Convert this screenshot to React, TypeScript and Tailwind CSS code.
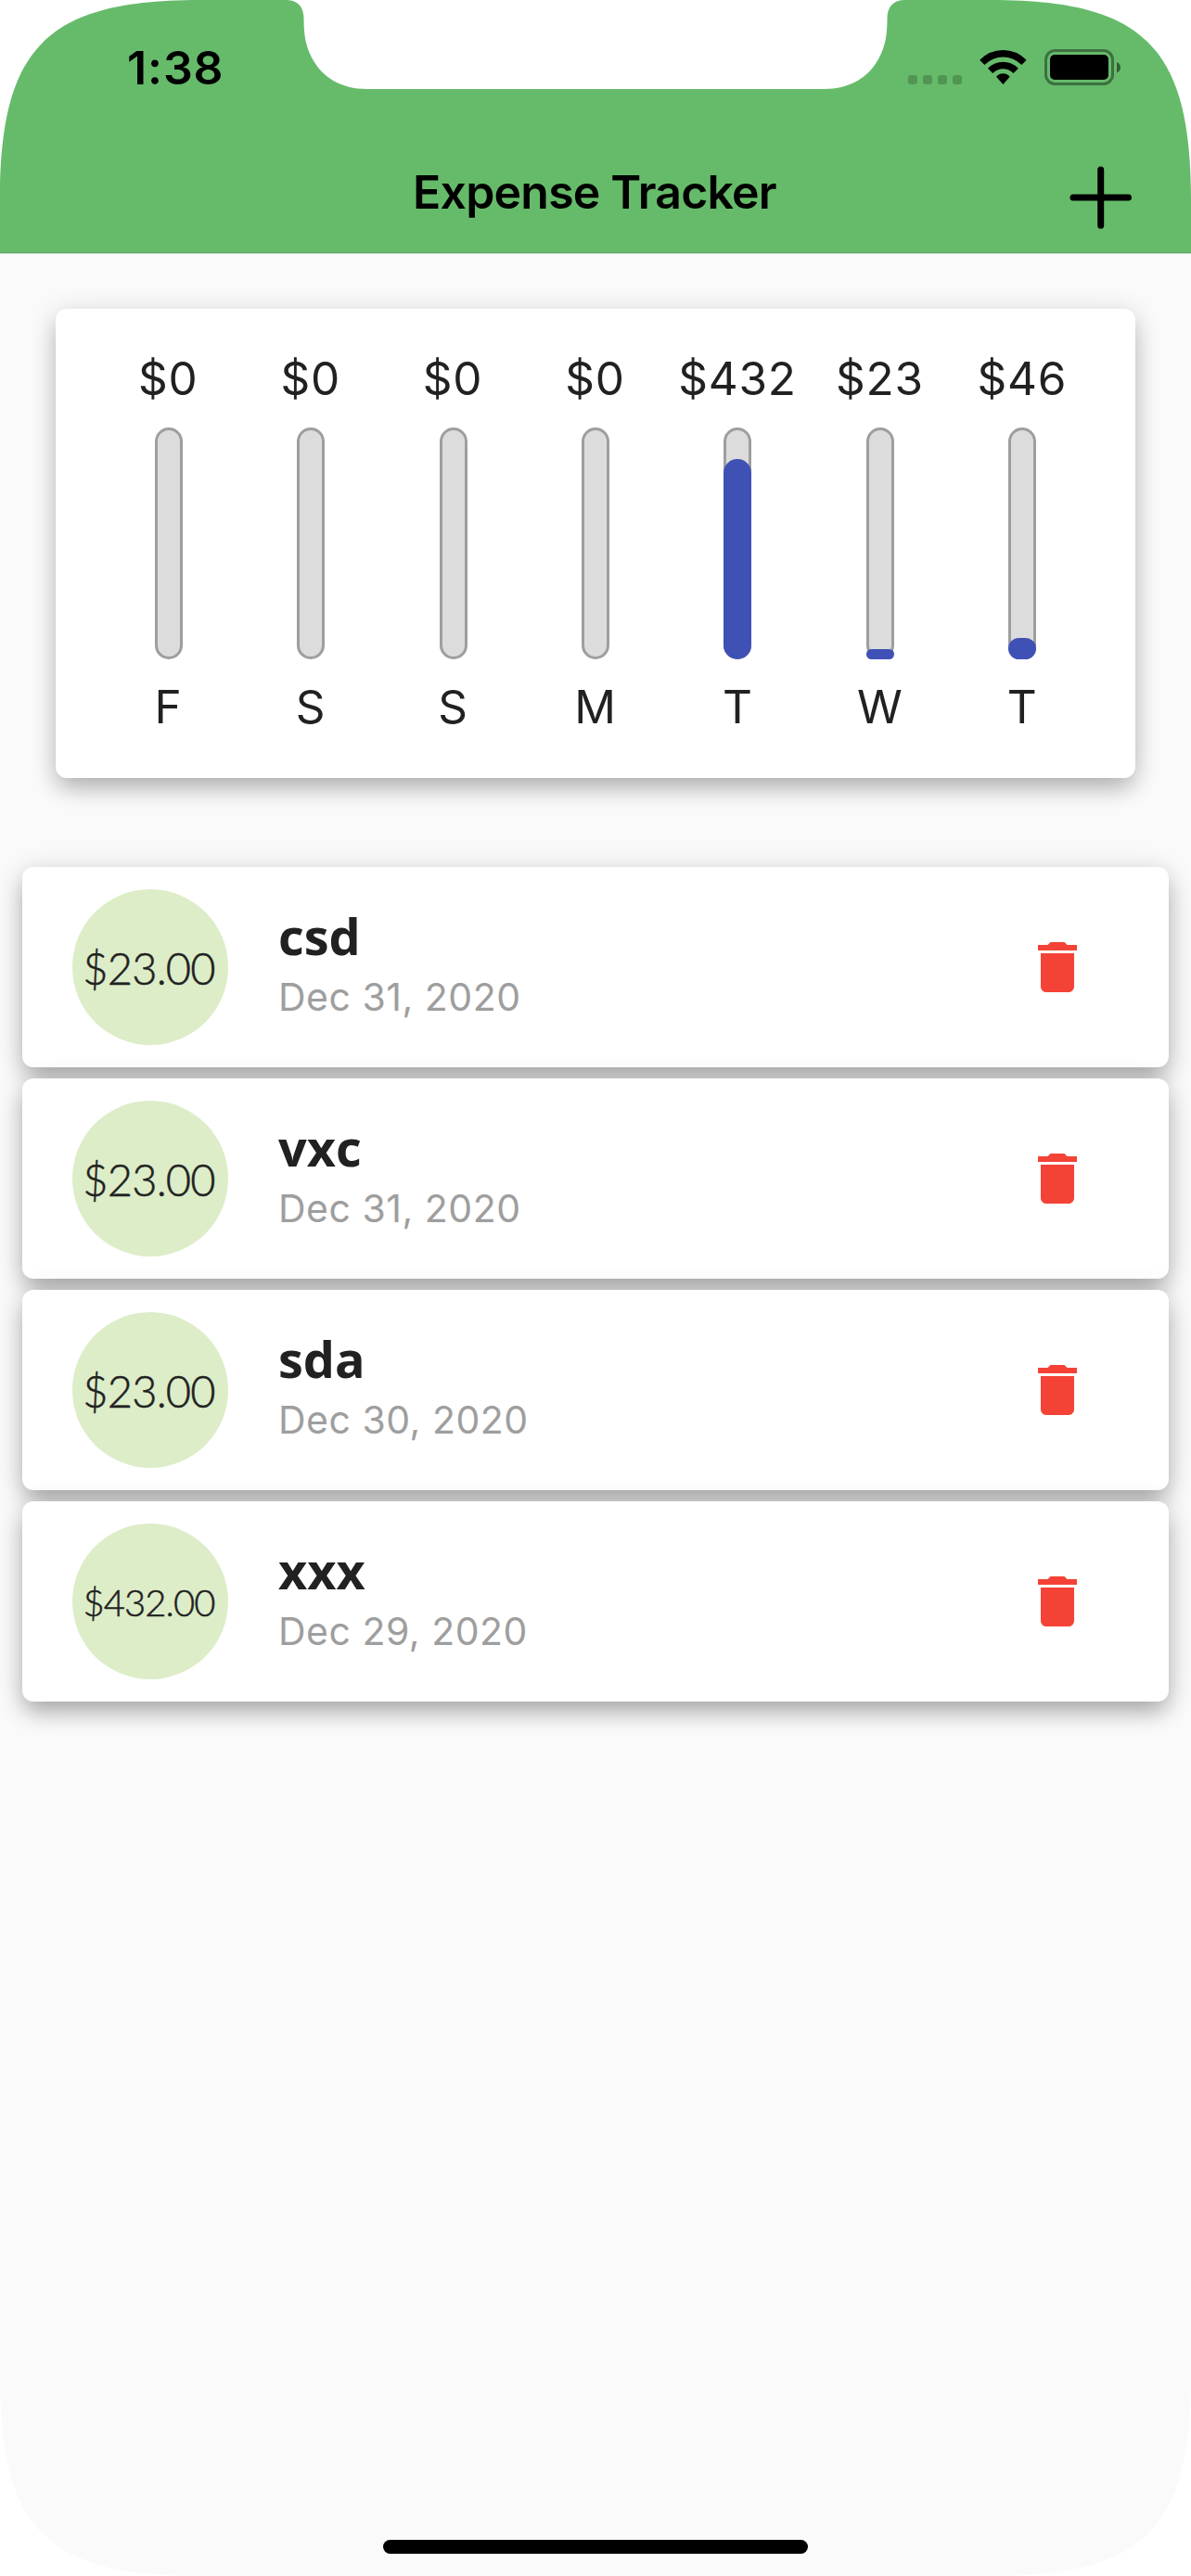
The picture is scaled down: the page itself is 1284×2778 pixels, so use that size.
import React from "react";

const total = 501;

const days = [
  { label: "F", amount: 0 },
  { label: "S", amount: 0 },
  { label: "S", amount: 0 },
  { label: "M", amount: 0 },
  { label: "T", amount: 432 },
  { label: "W", amount: 23 },
  { label: "T", amount: 46 },
];

const transactions = [
  { title: "csd", amount: "$23.00", date: "Dec 31, 2020", small: false },
  { title: "vxc", amount: "$23.00", date: "Dec 31, 2020", small: false },
  { title: "sda", amount: "$23.00", date: "Dec 30, 2020", small: false },
  { title: "xxx", amount: "$432.00", date: "Dec 29, 2020", small: true },
];

function Corner({ className }: { className: string }) {
  return (
    <svg className={`pointer-events-none absolute h-[220px] w-[220px] ${className}`} viewBox="0 0 220 220" fill="#fff">
      <path d="M0 0V215C0 122 17 75 46 46C75 17 122 0 215 0Z" />
    </svg>
  );
}

function Notch() {
  return (
    <svg className="pointer-events-none absolute top-0 left-[300px] h-[97px] w-[684px]" viewBox="300 0 684 97" fill="#fff">
      <path d="M308 0C321 0 327.5 7 327.5 20C327.5 38 329.5 49 336 62C347 83 367 96 396 96H888C917 96 937 83 948 62C954.5 49 956.5 38 956.5 20C956.5 7 963 0 976 0Z" />
    </svg>
  );
}

function StatusBar() {
  return (
    <div className="flex h-[144px] items-start justify-between pt-[40px] pr-[75px] pl-[137px]">
      <div className="text-[50px] leading-[66px] font-semibold tracking-[0.9px]">1:38</div>
      <div className="flex pt-[12px]">
        <div className="mt-[29px] mr-[18px] flex gap-[6px]">
          {[0, 1, 2, 3].map((i) => (
            <div key={i} className="size-[10px] rounded-[3px] bg-black/20" />
          ))}
        </div>
        <svg className="mt-[1px] mr-[17px] h-[40px] w-[53px]" viewBox="1055 53 53 40" fill="none" stroke="#000" strokeWidth="7.4">
          <path d="M1058.8 67.4C1071.500 54.6 1091.300 54.6 1104 67.4" />
          <path d="M1067.600 76.400C1075.400 68.600 1087.400 68.600 1095.200 76.400" />
          <path d="M1074 82.800C1078 78.200 1084.800 78.200 1088.800 82.800L1081.400 91Z" fill="#000" stroke="none" />
        </svg>
        <svg className="h-[42px] w-[84px]" viewBox="1125 52 84 42">
          <rect x="1127.500" y="54.500" width="72" height="36" rx="10" fill="none" stroke="#000" strokeOpacity=".4" strokeWidth="3" />
          <rect x="1132" y="59" width="63" height="27" rx="5" />
          <path d="M1204 67C1209.300 69 1209.300 76.500 1204 78.500Z" fillOpacity=".5" />
        </svg>
      </div>
    </div>
  );
}

function Header() {
  return (
    <header className="h-[274px] shrink-0 border-b border-[#d0dcd0] bg-[#66bb6a] text-black">
      <div className="h-[273px] border-b border-[#5ba75f]">
        <StatusBar />
        <div className="grid h-[127px] grid-cols-[1fr_auto_1fr] items-start">
          <h1 className="col-start-2 pt-[31px] pr-[2px] text-[50px] leading-[64px] font-semibold tracking-[-0.8px]">Expense Tracker</h1>
          <button className="mt-[33px] mr-[61px] justify-self-end" aria-label="Add expense">
            <svg className="h-[72px] w-[72px]" viewBox="0 0 72 72" stroke="#000" strokeWidth="7" strokeLinecap="round">
              <path d="M6 36H65.500M35.700 6V66.300" />
            </svg>
          </button>
        </div>
      </div>
    </header>
  );
}

function Chart() {
  return (
    <section className="mx-[60px] mt-[59px] grid h-[506px] shrink-0 grid-cols-7 rounded-[12px] bg-white px-[45px] pt-[45px] shadow-[0_14px_24px_-3px_rgba(0,0,0,0.22),0_4px_30px_rgba(0,0,0,0.14)]">
      {days.map((day, i) => (
        <div key={i} className="flex flex-col items-center text-[49.5px] text-[#212121]">
          <div className="h-[60px] pr-[1px] leading-[60px] tracking-[0.7px] whitespace-nowrap">${day.amount}</div>
          <div className="mt-[23px] grid h-[250px] w-[30px]">
            <div className="col-start-1 row-start-1 rounded-[15px] border-[3px] border-[#9e9e9e] bg-[#dcdcdc]" />
            <div
              className="col-start-1 row-start-1 self-end rounded-[15px] bg-[#3f51b5]"
              style={{ height: `${(day.amount / total) * 100}%` }}
            />
          </div>
          <div className="mt-[21px] pr-[1px] leading-[60px]">{day.label}</div>
        </div>
      ))}
    </section>
  );
}

function TransactionCard({ item }: { item: (typeof transactions)[number] }) {
  return (
    <li className="flex h-[216px] items-center rounded-[12px] bg-white pr-[84px] pl-[54px] shadow-[0_14px_24px_-3px_rgba(0,0,0,0.26),0_4px_30px_rgba(0,0,0,0.15)]">
      <div className="flex size-[168px] items-center justify-center rounded-full bg-[#dcedc8] pt-[2px] pr-[3px] font-['Lato'] font-light text-[#212121] [-webkit-text-stroke:0.5px_#212121]">
        <span className={item.small ? "text-[40px] tracking-[-0.9px]" : "text-[47px] tracking-[-0.8px]"}>{item.amount}</span>
      </div>
      <div className="ml-[54px] flex-1 pb-[9px]">
        <div className="font-['Open_Sans'] text-[54px] leading-[70px] font-bold text-[#212121]">{item.title}</div>
        <div className="pt-[3px] text-[41px] leading-[56px] tracking-[0.5px] text-[#9e9e9e]">{item.date}</div>
      </div>
      <button aria-label={`Delete ${item.title}`}>
        <svg className="size-[72px]" viewBox="0 0 24 24" fill="#f44336">
          <path d="M6 19c0 1.100.9 2 2 2h8c1.100 0 2-.9 2-2V7H6v12zM19 4h-3.500l-1-1h-5l-1 1H5v2h14V4z" />
        </svg>
      </button>
    </li>
  );
}

export default function App() {
  return (
    <div className="relative flex h-[2778px] w-[1284px] flex-col overflow-hidden bg-[#fafafa] font-['Inter',sans-serif]">
      <Header />
      <Chart />
      <ul className="mx-[24px] mt-[96px] flex flex-col gap-[12px]">
        {transactions.map((item, i) => (
          <TransactionCard key={i} item={item} />
        ))}
      </ul>
      <div className="mx-auto mt-auto mb-[24px] h-[15px] w-[458px] rounded-full bg-black" />
      <Corner className="top-0 left-0" />
      <Corner className="top-0 right-0 -scale-x-100" />
      <Corner className="bottom-0 left-0 -scale-y-100" />
      <Corner className="right-0 bottom-0 -scale-100" />
      <Notch />
    </div>
  );
}
